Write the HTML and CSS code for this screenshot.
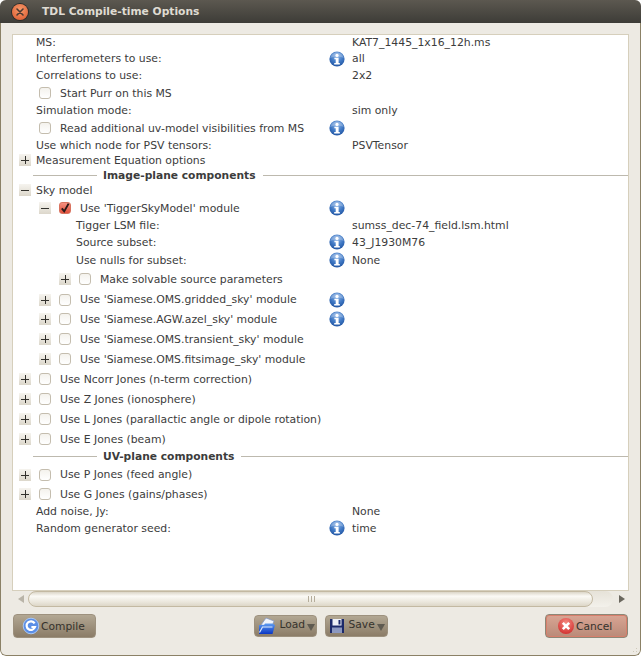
FILE: index.html
```html
<!DOCTYPE html>
<html lang="en">
<head>
    <meta charset="UTF-8">
    <title>TDL Compile-time Options</title>
    <link rel="stylesheet" href="styles.css">
</head>
<body>
    <svg class="defs" width="0" height="0">
        <defs>
            <radialGradient id="blue" cx="50%" cy="30%" r="75%">
                <stop offset="0" stop-color="#8fb6e8"/>
                <stop offset="0.55" stop-color="#3f78c4"/>
                <stop offset="1" stop-color="#1d4f9c"/>
            </radialGradient>
            <radialGradient id="red" cx="50%" cy="30%" r="75%">
                <stop offset="0" stop-color="#f58a80"/>
                <stop offset="1" stop-color="#d02b2b"/>
            </radialGradient>
            <linearGradient id="folder" x1="0" y1="0" x2="0" y2="1">
                <stop offset="0" stop-color="#5f9cf0"/>
                <stop offset="1" stop-color="#0a36c4"/>
            </linearGradient>
            <symbol id="info" viewBox="0 0 16 16">
                <circle cx="8" cy="8" r="7.6" fill="url(#blue)"/>
                <path d="M1.2 7C2 3.6 4.6 1.4 8 1.4s6 2.2 6.8 5.6C12 5.4 4 5.4 1.2 7z" fill="#fff" opacity=".25"/>
                <circle cx="8" cy="4.4" r="1.6" fill="#fff"/>
                <path d="M5.4 6.8h4.2v5.2h1.2v1.6H5.2V12h1.5V8.3H5.4z" fill="#fff"/>
            </symbol>
        </defs>
    </svg>

    <div class="window">
        <div class="titlebar">
            <span class="close-btn">
                <svg width="16" height="16" viewBox="0 0 16 16">
                    <path d="M5 5l6 6M11 5l-6 6" stroke="#4a3a32" stroke-width="1.6" stroke-linecap="round"/>
                </svg>
            </span>
            <span class="title">TDL Compile-time Options</span>
        </div>

        <div class="content">
            <div class="options">
                <div class="row"><div class="label lv0">MS:</div><div></div><div class="value">KAT7_1445_1x16_12h.ms</div></div>
                <div class="row"><div class="label lv0">Interferometers to use:</div><svg class="info"><use href="#info"/></svg><div class="value">all</div></div>
                <div class="row"><div class="label lv0">Correlations to use:</div><div></div><div class="value">2x2</div></div>
                <div class="row"><div class="label chk0"><span class="check"></span>Start Purr on this MS</div></div>
                <div class="row"><div class="label lv0">Simulation mode:</div><div></div><div class="value">sim only</div></div>
                <div class="row"><div class="label chk0"><span class="check"></span>Read additional uv-model visibilities from MS</div><svg class="info"><use href="#info"/></svg></div>
                <div class="row"><div class="label lv0">Use which node for PSV tensors:</div><div></div><div class="value">PSVTensor</div></div>
                <div class="row"><div class="label exp0"><span class="exp plus"></span>Measurement Equation options</div></div>

                <div class="section"><span>Image-plane components</span></div>

                <div class="row"><div class="label exp0"><span class="exp"></span>Sky model</div></div>
                <div class="row"><div class="label exp1"><span class="exp"></span><span class="check on"><svg width="12" height="12" viewBox="0 0 12 12"><path d="M2.8 6.4l2.4 3L9.6 1.6" fill="none" stroke="#2a1a18" stroke-width="1.9"/></svg></span>Use 'TiggerSkyModel' module</div><svg class="info"><use href="#info"/></svg></div>
                <div class="row"><div class="label lv1">Tigger LSM file:</div><div></div><div class="value">sumss_dec-74_field.lsm.html</div></div>
                <div class="row"><div class="label lv1">Source subset:</div><svg class="info"><use href="#info"/></svg><div class="value">43_J1930M76</div></div>
                <div class="row"><div class="label lv1">Use nulls for subset:</div><svg class="info"><use href="#info"/></svg><div class="value">None</div></div>
                <div class="row"><div class="label exp2"><span class="exp plus"></span><span class="check"></span>Make solvable source parameters</div></div>
                <div class="row"><div class="label exp1"><span class="exp plus"></span><span class="check"></span>Use 'Siamese.OMS.gridded_sky' module</div><svg class="info"><use href="#info"/></svg></div>
                <div class="row"><div class="label exp1"><span class="exp plus"></span><span class="check"></span>Use 'Siamese.AGW.azel_sky' module</div><svg class="info"><use href="#info"/></svg></div>
                <div class="row"><div class="label exp1"><span class="exp plus"></span><span class="check"></span>Use 'Siamese.OMS.transient_sky' module</div></div>
                <div class="row"><div class="label exp1"><span class="exp plus"></span><span class="check"></span>Use 'Siamese.OMS.fitsimage_sky' module</div></div>
                <div class="row"><div class="label exp0"><span class="exp plus"></span><span class="check"></span>Use Ncorr Jones (n-term correction)</div></div>
                <div class="row"><div class="label exp0"><span class="exp plus"></span><span class="check"></span>Use Z Jones (ionosphere)</div></div>
                <div class="row"><div class="label exp0"><span class="exp plus"></span><span class="check"></span>Use L Jones (parallactic angle or dipole rotation)</div></div>
                <div class="row"><div class="label exp0"><span class="exp plus"></span><span class="check"></span>Use E Jones (beam)</div></div>

                <div class="section uv"><span>UV-plane components</span></div>

                <div class="row"><div class="label exp0"><span class="exp plus"></span><span class="check"></span>Use P Jones (feed angle)</div></div>
                <div class="row"><div class="label exp0"><span class="exp plus"></span><span class="check"></span>Use G Jones (gains/phases)</div></div>
                <div class="row"><div class="label lv0">Add noise, Jy:</div><div></div><div class="value">None</div></div>
                <div class="row"><div class="label lv0">Random generator seed:</div><svg class="info"><use href="#info"/></svg><div class="value">time</div></div>
            </div>

            <div class="hscroll">
                <span class="arrow left"></span>
                <div class="trough">
                    <div class="thumb"><span class="grip"></span></div>
                </div>
                <span class="arrow right"></span>
            </div>

            <div class="buttons">
                <button class="btn big compile">
                    <svg width="18" height="18" viewBox="0 0 18 18">
                        <circle cx="9" cy="9" r="7.8" fill="#5b8ee6" stroke="#a9c6f2"/>
                        <path d="M12.6 6.4A4.3 4.3 0 1 0 13 10H9.4" fill="none" stroke="#fff" stroke-width="2.2"/>
                    </svg>
                    Compile
                </button>
                <div class="middle">
                    <button class="btn small">
                        <svg width="18" height="18" viewBox="0 0 18 18">
                            <path d="M3 8l5-7 8 3-2 5z" fill="#f2f5fb" stroke="#7f95c4" stroke-width=".7"/>
                            <path d="M1 8h5l1-1.5h7.5L17 8l-2.5 9H1z" fill="url(#folder)"/>
                            <path d="M1.5 15.5l3-5.5h10" fill="none" stroke="#dbe9fc" stroke-width="1.2"/>
                        </svg>
                        <span class="btn-text">Load</span><span class="drop"></span>
                    </button>
                    <button class="btn small">
                        <svg width="16" height="16" viewBox="0 0 16 16">
                            <rect x="1" y="1" width="14" height="14" fill="#1d2a6a"/>
                            <rect x="3.5" y="1" width="9" height="6.5" fill="#eef0f6"/>
                            <rect x="3" y="9.5" width="10" height="5.5" fill="#8c98c0"/>
                            <rect x="9.5" y="2" width="2" height="4.5" fill="#1d2a6a"/>
                        </svg>
                        <span class="btn-text">Save</span><span class="drop"></span>
                    </button>
                </div>
                <button class="btn big cancel">
                    <svg width="18" height="18" viewBox="0 0 18 18">
                        <circle cx="9" cy="9" r="8" fill="url(#red)"/>
                        <path d="M5.8 5.8l6.4 6.4M12.2 5.8l-6.4 6.4" stroke="#fff" stroke-width="2.6"/>
                    </svg>
                    Cancel
                </button>
            </div>
            <span class="resize-grip"></span>
        </div>
    </div>
</body>
</html>
```
FILE: styles.css
```css
* {
    margin: 0;
    padding: 0;
    box-sizing: border-box;
}

html, body {
    width: 641px;
    height: 656px;
    overflow: hidden;
    background: #fff;
}

body {
    font-family: "DejaVu Sans", sans-serif;
    font-size: 10.85px;
    color: #3c3c3c;
}

.defs {
    display: block;
    height: 0;
}

.window {
    width: 641px;
    height: 656px;
    display: flex;
    flex-direction: column;
    background: #edeae3;
    border-radius: 6px;
    overflow: hidden;
}

.titlebar {
    height: 23px;
    display: flex;
    align-items: center;
    background: linear-gradient(#5c5850, #3d3c37);
    flex-shrink: 0;
}

.close-btn {
    width: 16px;
    height: 16px;
    margin-left: 12px;
    border-radius: 50%;
    background: radial-gradient(circle at 50% 35%, #f79a6a, #d8552c);
    box-shadow: 0 0 0 1px #2c2b28;
}

.close-btn svg {
    display: block;
}

.title {
    margin-left: 14px;
    font-size: 10.7px;
    font-weight: bold;
    color: #dfdbd2;
}

.content {
    position: relative;
    flex: 1;
    display: flex;
    flex-direction: column;
    padding: 11px 11px 0;
    border: solid #8b8166;
    border-width: 0 1px 1px;
    border-radius: 0 0 6px 6px;
}

.options {
    height: 557px;
    background: #fff;
    border: 1px solid #d6cfbc;
    display: grid;
    grid-template-rows: 15px 17px 16px 20px 15px 20px 14px 16px 14px 16px 20px 14px 20px 16px 22px 19px 20px 20px 20px 20px 20px 20px 20px 16px 19px 20px 15px 18px;
    align-content: start;
}

.row {
    display: grid;
    grid-template-columns: 316px 16px 1fr;
    align-items: center;
    height: 100%;
}

.label {
    display: flex;
    align-items: center;
    white-space: nowrap;
}

.lv0 { padding-left: 23px; }
.lv1 { padding-left: 63px; }
.chk0 { padding-left: 23px; }
.exp0 { padding-left: 6px; }
.exp1 { padding-left: 26px; }
.exp2 { padding-left: 46px; }

.exp {
    position: relative;
    width: 12px;
    height: 12px;
    margin-right: 5px;
    background: linear-gradient(#f6f4ef, #dcd7cb);
    flex-shrink: 0;
}

.exp::before {
    content: "";
    position: absolute;
    left: 2px;
    top: 6px;
    width: 8px;
    height: 1px;
    background: #33322e;
}

.exp.plus::after {
    content: "";
    position: absolute;
    left: 6px;
    top: 2px;
    width: 1px;
    height: 8px;
    background: #33322e;
}

.check {
    width: 12px;
    height: 12px;
    margin: 0 9px 0 3px;
    border: 1px solid #c4bdae;
    border-radius: 3px;
    background: linear-gradient(#f4f2ed, #fff);
    flex-shrink: 0;
}

.check.on {
    border-color: #d9735f;
    background: linear-gradient(#f59080, #e0503c);
}

.check svg {
    display: block;
    margin: -1px;
}

.info {
    width: 16px;
    height: 16px;
}

.value {
    padding-left: 7px;
    white-space: nowrap;
}

.section {
    display: flex;
    align-items: center;
    padding-left: 20px;
    font-size: 10.7px;
    font-weight: bold;
}

.section.uv {
    padding-bottom: 1px;
}

.section span {
    padding: 0 7px 0 6px;
}

.section::before {
    content: "";
    width: 64px;
    height: 1px;
    background: #bdb9ae;
}

.section::after {
    content: "";
    flex: 1;
    height: 1px;
    background: #bdb9ae;
}

.hscroll {
    height: 16px;
    display: flex;
    align-items: center;
}

.arrow {
    width: 0;
    height: 0;
    border: 4px solid transparent;
    flex-shrink: 0;
}

.arrow.left {
    margin: 0 4px 0 6px;
    border-left: 0;
    border-right: 6px solid #b9b4a8;
}

.arrow.right {
    margin: 0 4px 0 6px;
    border-right: 0;
    border-left: 6px solid #6a675e;
}

.trough {
    flex: 1;
    height: 16px;
    background: linear-gradient(#e6e2d8, #f3f1eb);
    border-radius: 8px;
}

.thumb {
    width: 565px;
    height: 16px;
    display: flex;
    align-items: center;
    justify-content: center;
    background: linear-gradient(#dcd6c8, #fbfaf6 30%, #ebe7dd 70%, #ddd7c8);
    border: 1px solid #c3b9a2;
    border-radius: 8px;
}

.grip {
    width: 7px;
    height: 6px;
    margin-left: 1px;
    background: repeating-linear-gradient(90deg, #b5ad9b 0 1px, transparent 1px 3px);
}

.buttons {
    display: grid;
    grid-template-columns: 1fr auto 1fr;
    align-items: start;
    padding: 7px 1px 0;
}

.middle {
    display: flex;
    gap: 8px;
    padding-top: 1px;
}

.btn {
    display: flex;
    align-items: center;
    font-family: inherit;
    font-size: 10.7px;
    color: #35322c;
    background: linear-gradient(#b2a793, #8b7c67);
    border: 1px solid #9d917e;
    border-radius: 4px;
}

.big {
    width: 83px;
    height: 24px;
    padding-left: 8px;
    gap: 1px;
}

.small {
    width: 63px;
    height: 22px;
    padding-left: 3px;
    gap: 4px;
}

.btn-text {
    margin-top: -3px;
}

.drop {
    width: 0;
    height: 0;
    margin: 3px 0 0 -2px;
    border: solid transparent;
    border-width: 7px 4px 0;
    border-top-color: #5f5a50;
}

.compile {
    justify-self: start;
}

.cancel {
    justify-self: end;
    padding-left: 11px;
    background: linear-gradient(#d9a594, #b98a78);
    border-color: #8d8777;
    box-shadow: inset 0 0 0 1px #d77f6c;
}

.resize-grip {
    position: absolute;
    right: 1px;
    bottom: 1px;
    width: 10px;
    height: 10px;
    background: radial-gradient(circle, #cfc9ba 1px, transparent 1px) 0 0 / 3px 3px;
    clip-path: polygon(100% 0, 100% 100%, 0 100%);
}
```
